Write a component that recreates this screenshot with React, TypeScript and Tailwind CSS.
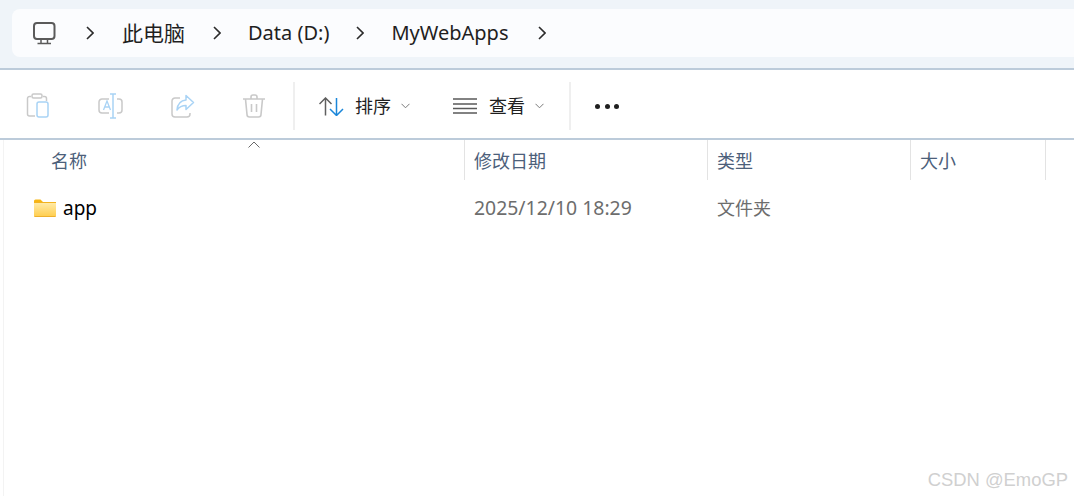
import React from "react";

const font = "font-['Noto_Sans','Noto_Sans_CJK_SC',sans-serif]";

const Chevron = () => (
  <svg width="8" height="14" viewBox="0 0 8 14" className="shrink-0">
    <path d="M1 1l6 6-6 6" fill="none" stroke="#2b2b2b" strokeWidth="1.6" />
  </svg>
);

const SmallChevron = () => (
  <svg width="9" height="6" viewBox="0 0 9 6" className="shrink-0">
    <path d="M.5.8l4 4 4-4" fill="none" stroke="#7a7a7a" strokeWidth="1" />
  </svg>
);

const Monitor = () => (
  <svg width="23" height="23" viewBox="0 0 23 23" className="shrink-0">
    <rect x="1" y="1" width="20.5" height="16" rx="3" fill="none" stroke="#5a5a5a" strokeWidth="2" />
    <path d="M8 17v4M14.5 17v4M4.500 21.5h13.500" fill="none" stroke="#5a5a5a" strokeWidth="1.500" />
  </svg>
);

const PasteIcon = () => (
  <svg width="24" height="26" viewBox="0 0 24 26">
    <path d="M9 23H3.5A2 2 0 0 1 1.500 21V5.500a2 2 0 0 1 2-2H5M17 3.500h1.500a2 2 0 0 1 2 2V8" fill="none" stroke="#c9c9c9" strokeWidth="1.500" />
    <rect x="6" y="1" width="10" height="4" rx="1.500" fill="none" stroke="#c9c9c9" strokeWidth="1.500" />
    <rect x="11" y="9" width="11" height="15" rx="2" fill="none" stroke="#a9d3f5" strokeWidth="1.500" />
  </svg>
);

const RenameIcon = () => (
  <svg width="25" height="26" viewBox="0 0 25 26">
    <path d="M11 6H4a3 3 0 0 0-3 3v8a3 3 0 0 0 3 3h7M19 6h2a3 3 0 0 1 3 3v8a3 3 0 0 1-3 3h-2" fill="none" stroke="#c9c9c9" strokeWidth="1.500" />
    <path d="M12 1h6M15 1v24M12 25h6" fill="none" stroke="#a9d3f5" strokeWidth="1.500" />
    <path d="M5.500 17l3.500-9 3.500 9M7 14h4" fill="none" stroke="#a9d3f5" strokeWidth="1.300" />
  </svg>
);

const ShareIcon = () => (
  <svg width="24" height="24" viewBox="0 0 24 24">
    <path d="M9 4H4a3 3 0 0 0-3 3v13a3 3 0 0 0 3 3h12a3 3 0 0 0 3-3v-1" fill="none" stroke="#c9c9c9" strokeWidth="1.500" />
    <path d="M15 1.500l7.500 7-7.500 7v-4c-4 0-6.500 1-9 4.500 .5-5.500 3.500-9.500 9-10z" fill="none" stroke="#a9d3f5" strokeWidth="1.500" strokeLinejoin="round" />
  </svg>
);

const TrashIcon = () => (
  <svg width="22" height="24" viewBox="0 0 22 24">
    <path d="M0 5h22M8 5V3a2 2 0 0 1 2-2h2a2 2 0 0 1 2 2v2M2.500 5l1.500 15.500a2.500 2.500 0 0 0 2.500 2.500h9a2.500 2.500 0 0 0 2.500-2.500L19.500 5M8.500 10v8M13.500 10v8" fill="none" stroke="#c9c9c9" strokeWidth="1.600" />
  </svg>
);

const SortIcon = () => (
  <svg width="25" height="19" viewBox="0 0 25 19" className="shrink-0">
    <path d="M6.500 18.500V1M.5 7l6-6 6 6" fill="none" stroke="#5f5f5f" strokeWidth="1.500" />
    <path d="M17.500 1v17M11 12l6.500 6.500L24 12" fill="none" stroke="#1a86d9" strokeWidth="1.500" />
  </svg>
);

const ListIcon = () => (
  <svg width="24" height="16" viewBox="0 0 24 16" className="shrink-0">
    <path d="M0 1h24M0 6h24M0 10.500h24M0 15h24" fill="none" stroke="#5a5a5a" strokeWidth="1.400" />
  </svg>
);

const FolderIcon = () => (
  <svg width="22" height="18" viewBox="0 0 22 18" className="shrink-0">
    <defs>
      <linearGradient id="folderFill" x1="0" y1="0" x2="0" y2="1">
        <stop offset="0" stopColor="#ffeaa6" />
        <stop offset="1" stopColor="#ffcf52" />
      </linearGradient>
    </defs>
    <path d="M0 2a1.500 1.500 0 0 1 1.500-1.500h5L9 3h13v3H0z" fill="#f7b512" />
    <rect x="0" y="3.500" width="22" height="14.500" rx="1" fill="#eeb02c" />
    <rect x="0" y="4" width="22" height="13" fill="url(#folderFill)" />
  </svg>
);

const Crumb = ({ text, size }: { text: string; size: string }) => (
  <span className={`${size} leading-7 text-[#1f1f1f] whitespace-nowrap`}>{text}</span>
);

const HeaderCell = ({ text, width }: { text: string; width: string }) => (
  <div className={`${width} h-10 pl-[9px] pt-0.5 border-r border-[#e3e3e3] flex items-center text-[18px] text-[#4c607a] whitespace-nowrap`}>
    {text}
  </div>
);

const Divider = () => <div className="w-0.5 h-12 bg-[#efefef] shrink-0" />;

export default function App() {
  return (
    <div className={`${font} relative w-[1074px] h-[496px] overflow-hidden bg-white`}>
      <div className="h-[70px] pt-[9px] pl-3 bg-[#eff4f9] border-b-2 border-[#bccbda]">
        <div className="h-12 pl-[21px] flex items-center bg-[#fbfcfe] rounded-l-lg">
          <Monitor />
          <div className="ml-[30px]"><Chevron /></div>
          <div className="ml-[28px]"><Crumb text="此电脑" size="text-[21px]" /></div>
          <div className="ml-[28px]"><Chevron /></div>
          <div className="ml-[27px]"><Crumb text="Data (D:)" size="text-[20px]" /></div>
          <div className="ml-[27px]"><Chevron /></div>
          <div className="ml-[27px]"><Crumb text="MyWebApps" size="text-[20px]" /></div>
          <div className="ml-[29px]"><Chevron /></div>
        </div>
      </div>

      <div className="h-[70px] pl-[26px] pt-1 flex items-center bg-white border-b-2 border-[#bccbda] text-[18px] text-[#1f1f1f]">
        <div className="w-[72px]"><PasteIcon /></div>
        <div className="w-[73px]"><RenameIcon /></div>
        <div className="w-[72px]"><ShareIcon /></div>
        <div className="w-[50px]"><TrashIcon /></div>
        <Divider />
        <div className="ml-6 flex items-center">
          <SortIcon />
          <span className="ml-[11px]">排序</span>
          <div className="ml-2.5"><SmallChevron /></div>
        </div>
        <div className="ml-[43px] flex items-center">
          <ListIcon />
          <span className="ml-3">查看</span>
          <div className="ml-2.5"><SmallChevron /></div>
        </div>
        <div className="ml-[25px]"><Divider /></div>
        <div className="ml-6 flex items-center gap-[4.5px]">
          <div className="w-[5px] h-[5px] rounded-full bg-[#1f1f1f]" />
          <div className="w-[5px] h-[5px] rounded-full bg-[#1f1f1f]" />
          <div className="w-[5px] h-[5px] rounded-full bg-[#1f1f1f]" />
        </div>
      </div>

      <div className="h-[356px] ml-[3px] border-l border-[#f3f3f3]">
        <div className="relative flex">
          <div className="w-[461px] h-10 pl-[47px] pt-0.5 border-r border-[#e3e3e3] flex items-center text-[18px] text-[#4c607a]">
            名称
          </div>
          <svg width="12" height="7" viewBox="0 0 12 7" className="absolute left-[244px] top-px">
            <path d="M.5 6.500L6 1l5.500 5.500" fill="none" stroke="#6a6a6a" strokeWidth="1" />
          </svg>
          <HeaderCell text="修改日期" width="w-[243px]" />
          <HeaderCell text="类型" width="w-[203px]" />
          <HeaderCell text="大小" width="w-[135px]" />
        </div>
        <div className="h-[56px] flex items-center">
          <div className="w-[461px] pl-[30px] flex items-center">
            <FolderIcon />
            <span className="ml-[7px] text-[19px] text-black">app</span>
          </div>
          <div className="w-[243px] pl-[9px] text-[19.4px] text-[#6d6d6d] whitespace-nowrap">2025/12/10 18:29</div>
          <div className="pl-[9px] text-[18px] text-[#6d6d6d]">文件夹</div>
        </div>
      </div>

      <div className="absolute right-[6px] bottom-[2px] text-[18.4px] text-[#d0d0d0] font-['Liberation_Sans',sans-serif] whitespace-nowrap">
        CSDN @EmoGP
      </div>
    </div>
  );
}
